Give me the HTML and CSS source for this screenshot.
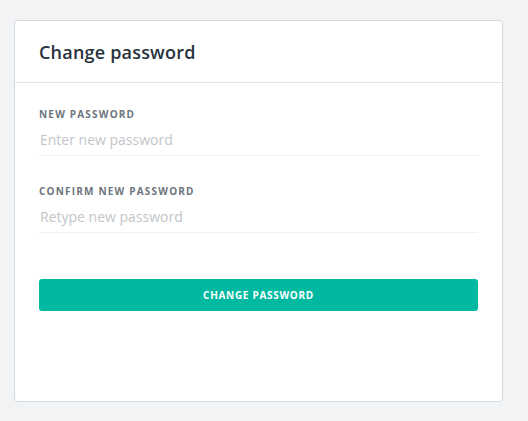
FILE: index.html
```html
<!DOCTYPE html>
<html lang="en">
<head>
<meta charset="utf-8">
<title>Change password</title>
<link rel="stylesheet" href="styles.css">
</head>
<body>
<div class="card">
  <div class="card-header">
    <h2 class="card-title">Change password</h2>
  </div>
  <form class="card-body">
    <div class="field">
      <label class="field-label" for="np">NEW PASSWORD</label>
      <input class="field-input" id="np" type="password" placeholder="Enter new password">
    </div>
    <div class="field">
      <label class="field-label" for="cp">CONFIRM NEW PASSWORD</label>
      <input class="field-input" id="cp" type="password" placeholder="Retype new password">
    </div>
    <button class="btn-primary" type="button">CHANGE PASSWORD</button>
  </form>
</div>
</body>
</html>
```

FILE: styles.css
```css
* { box-sizing: border-box; }
html, body { margin: 0; padding: 0; }
body {
  background: #f2f3f5;
  font-family: "Open Sans", "Noto Sans", sans-serif;
  padding: 20px 0 0 14px;
}
.card {
  width: 489px;
  height: 382px;
  background: #fff;
  border: 1px solid #d3d8dc;
  border-radius: 4px;
}
.card-header {
  height: 62px;
  border-bottom: 1px solid #e1e5e8;
  padding: 0 24px;
  display: flex;
  align-items: center;
}
.card-title {
  margin: 0;
  font-size: 18px;
  font-weight: 600;
  color: #27323d;
  letter-spacing: 0.2px;
}
.card-body {
  padding: 24px 24px 0 24px;
  display: flex;
  flex-direction: column;
}
.field {
  display: flex;
  flex-direction: column;
  margin-bottom: 28px;
}
.field-label {
  font-size: 10px;
  line-height: 14px;
  font-weight: 700;
  letter-spacing: 1.2px;
  color: #6c757d;
  margin-bottom: 3px;
}
.field-input {
  height: 32px;
  border: none;
  border-bottom: 1px solid #eef0f2;
  padding: 0 0 0 1px;
  font-family: inherit;
  font-size: 14px;
  color: #333;
  outline: none;
  background: transparent;
}
.field-input::placeholder {
  color: #c2c6ca;
}
.btn-primary {
  margin-top: 18px;
  height: 32px;
  border: none;
  border-radius: 3px;
  background: #00b9a0;
  color: #fff;
  font-family: inherit;
  font-size: 10px;
  font-weight: 700;
  letter-spacing: 0.7px;
  padding: 0;
}
```
